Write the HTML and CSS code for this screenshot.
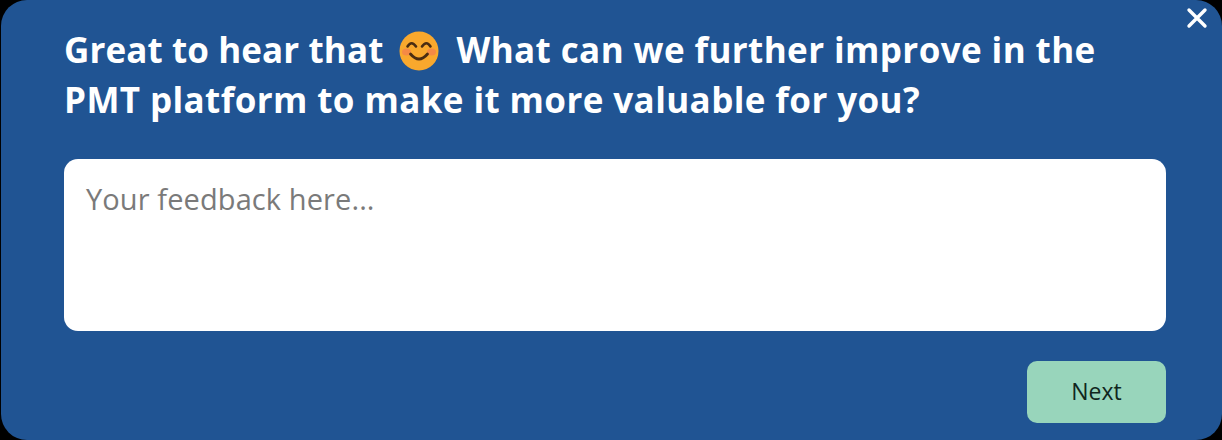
FILE: index.html
```html
<!DOCTYPE html>
<html lang="en">
<head>
  <meta charset="UTF-8" />
  <title>Feedback</title>
  <link rel="stylesheet" href="styles.css">
</head>
<body>
  <div class="panel">
    <button class="close" aria-label="Close">
      <svg viewBox="0 0 22 22" width="22" height="22">
        <path d="M3 3 L19 19 M19 3 L3 19" stroke="#fff" stroke-width="3.4" stroke-linecap="round" />
      </svg>
    </button>
    <h1 class="question">
      <span class="lead">Great to hear that</span>
      <svg class="smiley" viewBox="0 0 40 40" width="40" height="40">
        <circle cx="20" cy="20" r="19.5" fill="#f9a82d" />
        <ellipse cx="7.5" cy="21" fill="#f58a45" rx="4.5" ry="3.5" />
        <ellipse cx="32.5" cy="21" fill="#f58a45" rx="4.5" ry="3.5" />
        <path d="M8.5 15.5 Q12.5 9 17 15.5 M23 15.5 Q27.5 9 31.5 15.5" fill="none" stroke="#4a2c12" stroke-width="2.6" stroke-linecap="round" />
        <path d="M11.5 23 Q20 33 28.5 23" fill="none" stroke="#4a2c12" stroke-width="2.8" stroke-linecap="round" />
      </svg>
      What can we further improve in the PMT platform to make it more valuable for you?
    </h1>
    <textarea class="feedback" placeholder="Your feedback here..."></textarea>
    <div class="actions">
      <button class="next">Next</button>
    </div>
  </div>
</body>
</html>
```

FILE: styles.css
```css
html, body {
  height: 100%;
}

body {
  margin: 0;
  background-color: #000;
  font-family: "Open Sans", "Noto Sans", sans-serif;
}

.panel {
  position: relative;
  box-sizing: border-box;
  height: 440px;
  margin-left: 1px;
  padding: 25px 56px 17px 63px;
  background-color: #205493;
  border-radius: 26px;
}

.close {
  position: absolute;
  top: 7px;
  right: 14px;
  padding: 0;
  border: none;
  background: none;
  line-height: 0;
  cursor: pointer;
}

.question {
  margin: 0 0 34px;
  color: #fff;
  font-size: 35px;
  font-weight: 700;
  line-height: 50px;
  letter-spacing: 0.4px;
}

.lead {
  letter-spacing: 0.1px;
}

.smiley {
  vertical-align: -8px;
  margin: 0 8px 0 6px;
}

.feedback {
  display: block;
  box-sizing: border-box;
  width: 100%;
  height: 172px;
  padding: 20px 22px;
  border: none;
  border-radius: 14px;
  background-color: #fff;
  font-family: inherit;
  font-size: 29px;
  line-height: 40px;
  letter-spacing: 0.1px;
  resize: none;
  outline: none;
}

.feedback::placeholder {
  color: #7a7a7a;
  opacity: 1;
}

.actions {
  display: flex;
  justify-content: flex-end;
  margin-top: 30px;
}

.next {
  width: 139px;
  height: 62px;
  padding: 0 0 3px;
  border: none;
  border-radius: 10px;
  background-color: #98d5bb;
  color: #10261d;
  font-family: inherit;
  font-size: 23px;
  cursor: pointer;
}
```
